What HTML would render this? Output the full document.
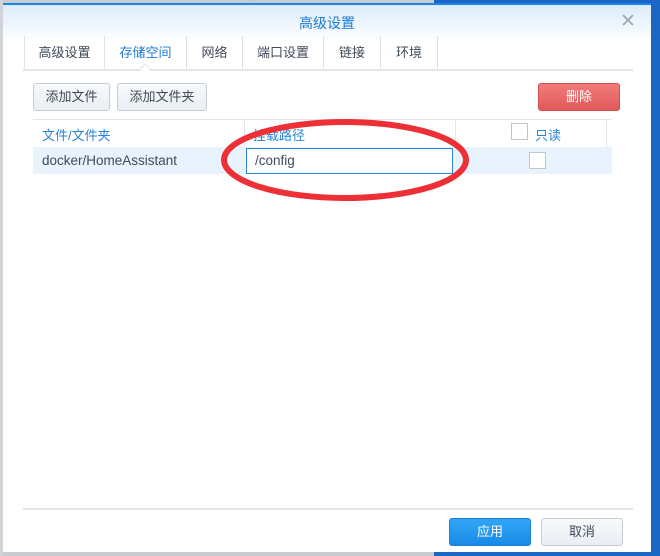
<!DOCTYPE html>
<html><head><meta charset="utf-8"><style>
*{margin:0;padding:0;box-sizing:border-box}
body{width:660px;height:556px;position:relative;overflow:hidden;background:#1a66c4;font-family:"Liberation Sans","Noto Sans CJK SC",sans-serif;font-size:13px;color:#404a58}
.abs{position:absolute}
.dlg{left:3px;top:3px;width:648px;height:549px;background:#fff;border-top:2px solid #1a85e8}
.hdr{left:0;top:0;width:648px;height:34px;background:linear-gradient(#dcecf9,#fbfdff)}
.btn{position:absolute;height:28px;border:1px solid #c6ccd4;border-radius:3px;background:linear-gradient(#f8fafc,#e9eef3);text-align:center;line-height:26px;font-size:13px;color:#404a58}
.tab{position:absolute;top:31px;height:33px;line-height:33px;text-align:center;font-size:13px;border-left:1px solid #dde2e7}
</style></head><body>
<div class="abs" style="left:0;top:0;width:434px;height:3px;background:#c8ccd0"></div>
<div class="abs" style="left:0;top:552px;width:434px;height:4px;background:#c8ccd0"></div>
<div class="abs" style="left:0;top:0;width:3px;height:556px;background:#d0d4d8"></div>
<div class="abs dlg">
 <div class="abs hdr"></div>
 <div class="abs" style="left:0;top:8px;width:648px;text-align:center;font-size:14px;color:#1a7ad8">高级设置</div>
 <div class="abs" style="left:617px;top:5px;font-size:19px;color:#a0a8b0;font-family:'DejaVu Sans',sans-serif">✕</div>
 <div class="tab" style="left:21px;width:80px">高级设置</div>
 <div class="tab" style="left:101px;width:82px;color:#1a7ad8">存储空间</div>
 <div class="tab" style="left:183px;width:56px">网络</div>
 <div class="tab" style="left:239px;width:81px">端口设置</div>
 <div class="tab" style="left:320px;width:57px">链接</div>
 <div class="tab" style="left:377px;width:58px;border-right:1px solid #dde2e7">环境</div>
 <div class="abs" style="left:20px;top:64px;width:610px;height:2px;background:#e2e6ea"></div>
 <div class="abs" style="left:138px;top:60px;width:8px;height:8px;background:#fff;border-left:1px solid #dde2e7;border-top:1px solid #dde2e7;transform:rotate(45deg)"></div>
 <div class="btn" style="left:30px;top:78px;width:77px">添加文件</div>
 <div class="btn" style="left:114px;top:78px;width:90px">添加文件夹</div>
 <div class="btn" style="left:535px;top:78px;width:82px;background:linear-gradient(#f47a7a,#e05a5a);border-color:#d45050;color:#fff">删除</div>
 <div class="abs" style="left:30px;top:114px;width:579px;height:1px;background:#e2e6ea"></div>
 <div class="abs" style="left:241px;top:114px;width:1px;height:28px;background:#e2e6ea"></div>
 <div class="abs" style="left:452px;top:114px;width:1px;height:28px;background:#e2e6ea"></div>
 <div class="abs" style="left:603px;top:114px;width:1px;height:28px;background:#e2e6ea"></div>
 <div class="abs" style="left:39px;top:120px;color:#2a84d8">文件/文件夹</div>
 <div class="abs" style="left:250px;top:120px;color:#2a84d8">挂载路径</div>
 <div class="abs" style="left:508px;top:118px;width:17px;height:17px;border:1px solid #c0c6cc;background:#fff"></div>
 <div class="abs" style="left:532px;top:120px;color:#2a84d8">只读</div>
 <div class="abs" style="left:30px;top:142px;width:579px;height:27px;background:#e8f3fd"></div>
 <div class="abs" style="left:39px;top:148px;font-size:13.5px">docker/HomeAssistant</div>
 <div class="abs" style="left:243px;top:143px;width:207px;height:26px;background:#fff;border:1px solid #2a84d8;padding-left:8px;line-height:24px;font-size:13.5px">/config</div>
 <div class="abs" style="left:526px;top:147px;width:17px;height:17px;border:1px solid #c0c6cc;background:#fff"></div>
 <svg class="abs" style="left:0;top:0" width="648" height="549"><ellipse cx="342" cy="155" rx="121" ry="38" fill="none" stroke="#ec3035" stroke-width="6"/></svg>
 <div class="abs" style="left:20px;top:503px;width:610px;height:2px;background:#e2e6ea"></div>
 <div class="btn" style="left:446px;top:513px;width:82px;background:linear-gradient(#34a6f8,#1a8ae6);border-color:#1a80d8;color:#fff">应用</div>
 <div class="btn" style="left:538px;top:513px;width:82px">取消</div>
</div>
</body></html>
